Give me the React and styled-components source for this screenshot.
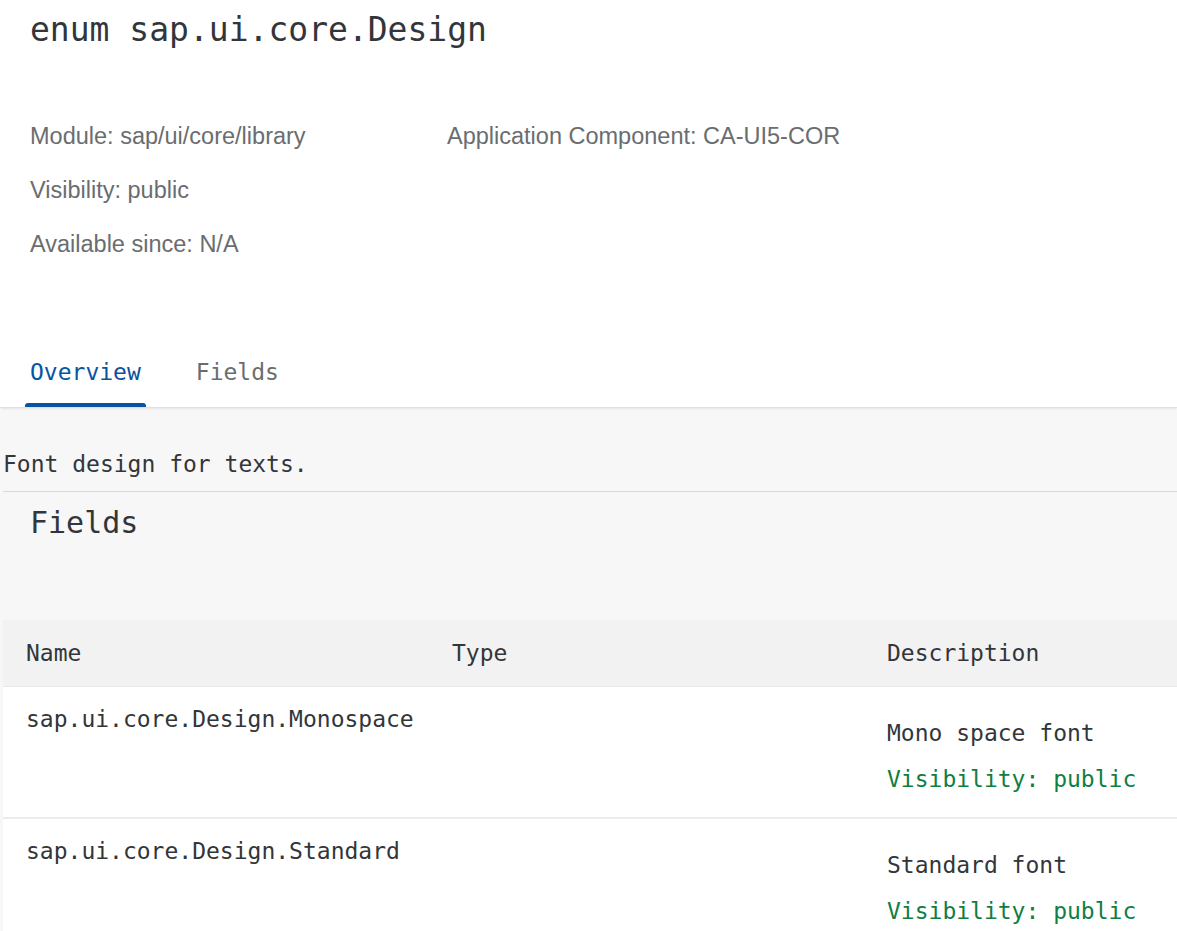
import styled, { createGlobalStyle } from "styled-components";

const Global = createGlobalStyle`
  html, body {
    margin: 0;
    padding: 0;
    background: #f7f7f7;
  }
  body {
    font-family: "DejaVu Sans Mono", "Liberation Mono", monospace;
    color: #32363a;
  }
`;

const fields = [
  { name: "sap.ui.core.Design.Monospace", desc: "Mono space font" },
  { name: "sap.ui.core.Design.Standard", desc: "Standard font" },
];

const App = () => {
  return (
    <Page>
      <Global />
      <Header>
        <Title>enum sap.ui.core.Design</Title>
        <Meta>
          <MetaItem>Module: sap/ui/core/library</MetaItem>
          <MetaItem>Application Component: CA-UI5-COR</MetaItem>
          <MetaItem>Visibility: public</MetaItem>
          <MetaItem />
          <MetaItem>Available since: N/A</MetaItem>
        </Meta>
      </Header>

      <TabBar>
        <Tab active>Overview</Tab>
        <Tab>Fields</Tab>
      </TabBar>

      <Content>
        <Summary>Font design for texts.</Summary>
        <SectionTitle>Fields</SectionTitle>

        <Table>
          <HeadCell>Name</HeadCell>
          <HeadCell>Type</HeadCell>
          <HeadCell>Description</HeadCell>
          {fields.map((f, i) => (
            <Row key={f.name} last={i === fields.length - 1}>
              <Cell>{f.name}</Cell>
              <Cell />
              <Cell>
                <Desc>
                  <div>{f.desc}</div>
                  <Visibility>Visibility: public</Visibility>
                </Desc>
              </Cell>
            </Row>
          ))}
        </Table>
      </Content>
    </Page>
  );
};

const Page = styled.div`
  min-height: 100vh;
  display: flex;
  flex-direction: column;
`;

const Header = styled.div`
  background: #ffffff;
  padding: 10px 0 0 30px;
  height: 331px;
  box-sizing: border-box;
`;

const Title = styled.h1`
  margin: 0;
  font-size: 33px;
  font-weight: normal;
  line-height: 40px;
  color: #32363a;
`;

const Meta = styled.div`
  display: grid;
  grid-template-columns: 417px 1fr;
  margin-top: 59px;
  font-family: "Liberation Sans", Arial, sans-serif;
  font-size: 23.5px;
  color: #6a6d70;
`;

const MetaItem = styled.div`
  line-height: 54px;
  height: 54px;
`;

const TabBar = styled.div`
  display: flex;
  gap: 45px;
  padding-left: 25px;
  height: 76px;
  background: #ffffff;
  border-bottom: 1px solid #e0e0e0;
  box-shadow: 0 2px 2px -1px rgba(0, 0, 0, 0.08);
  position: relative;
  z-index: 1;
`;

const Tab = styled.div`
  position: relative;
  display: flex;
  align-items: center;
  padding: 5px 5px 0;
  font-size: 23px;
  color: ${(p) => (p.active ? "#0854a0" : "#6a6d70")};

  &::after {
    content: "";
    display: ${(p) => (p.active ? "block" : "none")};
    position: absolute;
    left: 0;
    right: 0;
    bottom: 0;
    height: 4px;
    border-radius: 3px 3px 0 0;
    background: #0854a0;
  }
`;

const Content = styled.div`
  flex: 1;
  background: #f7f7f7;
  padding-left: 3px;
`;

const Summary = styled.p`
  margin: 41px 0 0;
  padding-bottom: 12px;
  border-bottom: 1px solid #d9d9d9;
  font-size: 23px;
  line-height: 30px;
`;

const SectionTitle = styled.h2`
  margin: 11px 0 77px 27px;
  font-size: 30px;
  font-weight: normal;
  line-height: 40px;
`;

const Table = styled.div`
  display: grid;
  grid-template-columns: 426px 435px 1fr;
  font-size: 23px;
  line-height: 30px;
`;

const HeadCell = styled.div`
  background: #f2f2f2;
  height: 66px;
  padding-left: 23px;
  display: flex;
  align-items: center;
  border-bottom: 1px solid #e8e8e8;
`;

const Row = styled.div`
  display: contents;

  & > div {
    border-bottom: ${(p) => (p.last ? "none" : "2px solid #ececec")};
  }
`;

const Cell = styled.div`
  background: #ffffff;
  padding: 17px 0 23px 23px;
  min-height: 130px;
  box-sizing: border-box;
`;

const Desc = styled.div`
  margin-top: 14px;
  display: flex;
  flex-direction: column;
  gap: 16px;
`;

const Visibility = styled.div`
  color: #107e3e;
`;

export default App;
